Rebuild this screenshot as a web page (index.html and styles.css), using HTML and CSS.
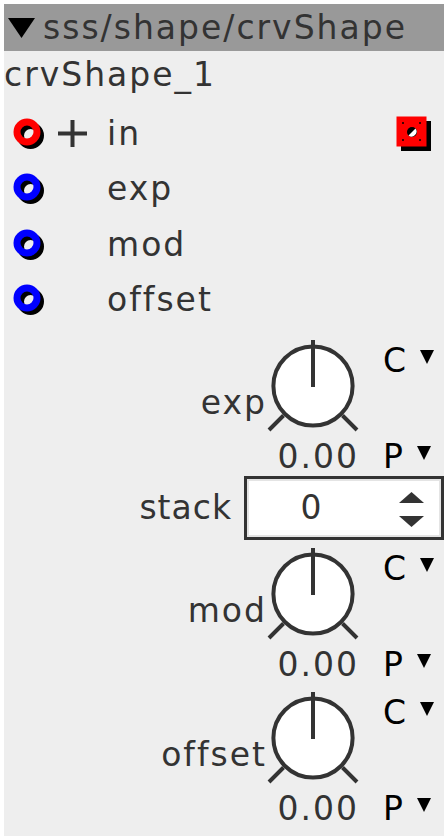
FILE: index.html
```html
<!DOCTYPE html>
<html>
<head>
<meta charset="utf-8">
<link rel="stylesheet" href="styles.css">
</head>
<body>
<div class="panel">
  <div class="header">
    <svg class="hdr-tri" width="27" height="20" viewBox="0 0 27 20"><polygon points="0,0 27,0 13.5,20" fill="#000"/></svg>
    <span class="hdr-text">sss/shape/crvShape</span>
  </div>
  <div class="title">crvShape_1</div>
  <div class="inlets">
    <div class="inlet">
      <svg class="ring" width="32" height="32" viewBox="0 0 32 32"><circle cx="17.5" cy="17.5" r="10" fill="none" stroke="#000" stroke-width="7"/><circle cx="14" cy="14" r="10" fill="none" stroke="#f00" stroke-width="7"/></svg>
      <svg class="plus" width="29" height="29" viewBox="0 0 29 29"><path d="M0 14.5H29M14.5 1V28" stroke="#333" stroke-width="4"/></svg>
      <span class="pname">in</span>
      <svg class="outlet" width="36" height="36" viewBox="0 0 36 36"><rect x="5" y="5" width="30" height="30" fill="#000"/><rect x="0.5" y="0.5" width="30" height="30" fill="#f00"/><circle cx="16" cy="16" r="5" fill="#000"/><path d="M19.5 12.5A5 5 0 0 1 12.5 19.5Z" fill="#fff"/><rect x="6" y="6" width="2" height="2" fill="#400"/><rect x="23" y="6" width="2" height="2" fill="#400"/><rect x="6" y="23" width="2" height="2" fill="#400"/><rect x="23" y="23" width="2" height="2" fill="#400"/></svg>
    </div>
    <div class="inlet">
      <svg class="ring" width="32" height="32" viewBox="0 0 32 32"><circle cx="17.5" cy="17.5" r="10" fill="none" stroke="#000" stroke-width="7"/><circle cx="14" cy="14" r="10" fill="none" stroke="#00f" stroke-width="7"/></svg>
      <span class="spacer"></span>
      <span class="pname">exp</span>
    </div>
    <div class="inlet">
      <svg class="ring" width="32" height="32" viewBox="0 0 32 32"><circle cx="17.5" cy="17.5" r="10" fill="none" stroke="#000" stroke-width="7"/><circle cx="14" cy="14" r="10" fill="none" stroke="#00f" stroke-width="7"/></svg>
      <span class="spacer"></span>
      <span class="pname">mod</span>
    </div>
    <div class="inlet">
      <svg class="ring" width="32" height="32" viewBox="0 0 32 32"><circle cx="17.5" cy="17.5" r="10" fill="none" stroke="#000" stroke-width="7"/><circle cx="14" cy="14" r="10" fill="none" stroke="#00f" stroke-width="7"/></svg>
      <span class="spacer"></span>
      <span class="pname">offset</span>
    </div>
  </div>

  <div class="knob first">
    <span class="klabel">exp</span>
    <svg class="dial" width="92" height="92" viewBox="0 0 92 92"><circle cx="46" cy="46" r="39.6" fill="#fff" stroke="#333" stroke-width="4"/><path d="M46 0V47M16.5 75.5L2 90M75.5 75.5L90 90" stroke="#333" stroke-width="4" fill="none"/></svg>
    <div class="sel">C<svg class="tri" width="14" height="14" viewBox="0 0 14 14"><polygon points="0,0 14,0 7,14" fill="#000"/></svg></div>
    <span class="kval">0.00</span>
    <div class="sel">P<svg class="tri" width="14" height="14" viewBox="0 0 14 14"><polygon points="0,0 14,0 7,14" fill="#000"/></svg></div>
  </div>

  <div class="stack-row">
    <span class="slabel">stack</span>
    <div class="spin">
      <span class="spin-val">0</span>
      <svg class="arrows" width="25" height="36" viewBox="0 0 25 36"><polygon points="0,11 12.5,0 25,11" fill="#333"/><polygon points="0,24 25,24 12.5,35" fill="#333"/></svg>
    </div>
  </div>

  <div class="knob">
    <span class="klabel">mod</span>
    <svg class="dial" width="92" height="92" viewBox="0 0 92 92"><circle cx="46" cy="46" r="39.6" fill="#fff" stroke="#333" stroke-width="4"/><path d="M46 0V47M16.5 75.5L2 90M75.5 75.5L90 90" stroke="#333" stroke-width="4" fill="none"/></svg>
    <div class="sel">C<svg class="tri" width="14" height="14" viewBox="0 0 14 14"><polygon points="0,0 14,0 7,14" fill="#000"/></svg></div>
    <span class="kval">0.00</span>
    <div class="sel">P<svg class="tri" width="14" height="14" viewBox="0 0 14 14"><polygon points="0,0 14,0 7,14" fill="#000"/></svg></div>
  </div>

  <div class="knob">
    <span class="klabel">offset</span>
    <svg class="dial" width="92" height="92" viewBox="0 0 92 92"><circle cx="46" cy="46" r="39.6" fill="#fff" stroke="#333" stroke-width="4"/><path d="M46 0V47M16.5 75.5L2 90M75.5 75.5L90 90" stroke="#333" stroke-width="4" fill="none"/></svg>
    <div class="sel">C<svg class="tri" width="14" height="14" viewBox="0 0 14 14"><polygon points="0,0 14,0 7,14" fill="#000"/></svg></div>
    <span class="kval">0.00</span>
    <div class="sel">P<svg class="tri" width="14" height="14" viewBox="0 0 14 14"><polygon points="0,0 14,0 7,14" fill="#000"/></svg></div>
  </div>
</div>
</body>
</html>
```

FILE: styles.css
```css
html, body {
  margin: 0;
  padding: 0;
  background: #ffffff;
}

body {
  padding: 4px;
  font-family: "DejaVu Sans", sans-serif;
  font-size: 33px;
  letter-spacing: 2px;
  color: #333333;
}

.panel {
  width: 440px;
  height: 832px;
  background: #eeeeee;
  overflow: hidden;
}

.header {
  height: 47px;
  background: #999999;
  display: flex;
  align-items: center;
  padding-left: 4px;
}

.hdr-tri {
  display: block;
  margin-right: 8px;
  margin-top: 1px;
}

.hdr-text {
  line-height: 47px;
  white-space: nowrap;
}

.title {
  height: 47px;
  line-height: 47px;
  white-space: nowrap;
}

.inlets {
  padding-top: 8px;
}

.inlet {
  height: 55.5px;
  display: grid;
  grid-template-columns: 45px 49px 1fr auto;
  align-items: center;
  padding: 0 12px 0 9px;
}

.ring,
.plus,
.outlet {
  display: block;
}

.pname {
  line-height: 38px;
}

.knob {
  display: grid;
  grid-template-columns: 1fr 92px 85px;
  grid-template-rows: 92px 38px;
  row-gap: 6px;
  margin-top: 8px;
}

.knob.first {
  margin-top: 12px;
}

.klabel {
  grid-column: 1;
  grid-row: 1;
  justify-self: end;
  align-self: start;
  margin-top: 44px;
  line-height: 38px;
}

.dial {
  grid-column: 2;
  grid-row: 1;
  display: block;
}

.sel {
  display: flex;
  align-items: flex-start;
  padding-left: 24px;
  line-height: 38px;
  color: #000000;
}

.knob > .sel:nth-of-type(1) {
  grid-column: 3;
  grid-row: 1;
  align-self: start;
  margin-top: 2px;
}

.tri {
  display: block;
  margin-left: 12px;
  margin-top: 8px;
}

.kval {
  grid-column: 1 / 3;
  grid-row: 2;
  text-align: right;
  line-height: 38px;
}

.knob > .sel:last-child {
  grid-column: 3;
  grid-row: 2;
}

.stack-row {
  display: flex;
  justify-content: flex-end;
  align-items: center;
  height: 64px;
}

.slabel {
  line-height: 38px;
  letter-spacing: 1px;
  margin-right: 12px;
}

.spin {
  box-sizing: border-box;
  width: 200px;
  height: 64px;
  border: 3px solid #333333;
  background: #ffffff;
  box-shadow: inset 0 0 0 2px #e4e4e4;
  display: flex;
  align-items: center;
}

.spin-val {
  width: 130px;
  text-align: center;
  line-height: 38px;
}

.arrows {
  display: block;
  margin-left: 22px;
  margin-top: 3px;
}
```
